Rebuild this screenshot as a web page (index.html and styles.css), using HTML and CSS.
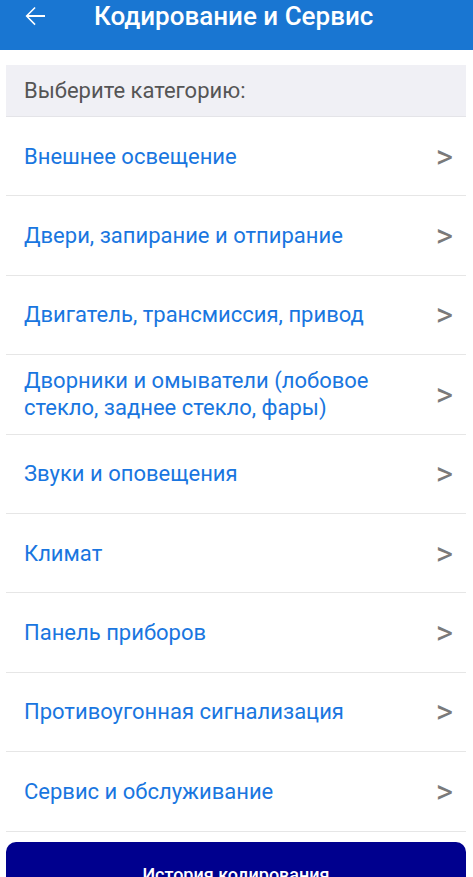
FILE: index.html
```html
<!DOCTYPE html>
<html lang="ru">
<head>
    <meta charset="UTF-8">
    <meta name="viewport" content="width=device-width, initial-scale=1.0">
    <title>Кодирование и Сервис</title>
    <link rel="stylesheet" href="styles.css">
</head>
<body>
    <div class="toolbar">
        <span class="back">
            <svg width="30" height="30" viewBox="0 0 24 24"><path d="M20 11.2H6.9l5.6-5.6-.9-.9L4.4 12l7.2 7.3.9-.9-5.6-5.6H20v-1.6z" fill="#fff"/></svg>
        </span>
        <h1>Кодирование и Сервис</h1>
    </div>

    <div class="content">
        <div class="list-head">Выберите категорию:</div>
        <ul class="categories">
            <li><span>Внешнее освещение</span><span class="arrow">&gt;</span></li>
            <li><span>Двери, запирание и отпирание</span><span class="arrow">&gt;</span></li>
            <li><span>Двигатель, трансмиссия, привод</span><span class="arrow">&gt;</span></li>
            <li><span>Дворники и омыватели (лобовое стекло, заднее стекло, фары)</span><span class="arrow">&gt;</span></li>
            <li><span>Звуки и оповещения</span><span class="arrow">&gt;</span></li>
            <li><span>Климат</span><span class="arrow">&gt;</span></li>
            <li><span>Панель приборов</span><span class="arrow">&gt;</span></li>
            <li><span>Противоугонная сигнализация</span><span class="arrow">&gt;</span></li>
            <li><span>Сервис и обслуживание</span><span class="arrow">&gt;</span></li>
        </ul>
        <button class="history-btn">История кодирования</button>
    </div>
</body>
</html>
```

FILE: styles.css
```css
body {
    margin: 0;
    font-family: Roboto, "Noto Sans", sans-serif;
    background: #fff;
    overflow: hidden;
}
.toolbar {
    height: 50px;
    background-color: #1976d2;
    display: flex;
    align-items: center;
    padding: 0 20px 18px;
    box-sizing: border-box;
}
.back {
    display: flex;
    width: 30px;
    margin-right: 44px;
}
.toolbar h1 {
    margin: 0;
    color: #fff;
    font-size: 26px;
    font-weight: 500;
    line-height: 30px;
}
.content {
    padding: 15px 7px 0 6px;
}
.list-head {
    background-color: #f0f0f5;
    height: 51px;
    display: flex;
    align-items: center;
    padding-left: 18px;
    color: #555;
    font-size: 22px;
    border-bottom: 1px solid #e4e4e8;
}
.categories {
    list-style: none;
    margin: 0;
    padding: 0;
}
.categories li {
    height: 78.4px;
    display: flex;
    align-items: center;
    justify-content: space-between;
    padding: 0 13px 0 18px;
    border-bottom: 1px solid #e6e6e6;
    color: #1976e0;
    font-size: 22px;
    line-height: 27px;
}
.categories li span:first-child {
    max-width: 390px;
}
.arrow {
    color: #7a7a7a;
    font-size: 33px;
    line-height: 27px;
}
.history-btn {
    display: block;
    width: 100%;
    margin-top: 10px;
    height: 66px;
    border: none;
    border-radius: 10px;
    background-color: #00008e;
    color: #fff;
    font-family: Roboto, sans-serif;
    font-size: 18px;
    font-weight: 500;
}
```
